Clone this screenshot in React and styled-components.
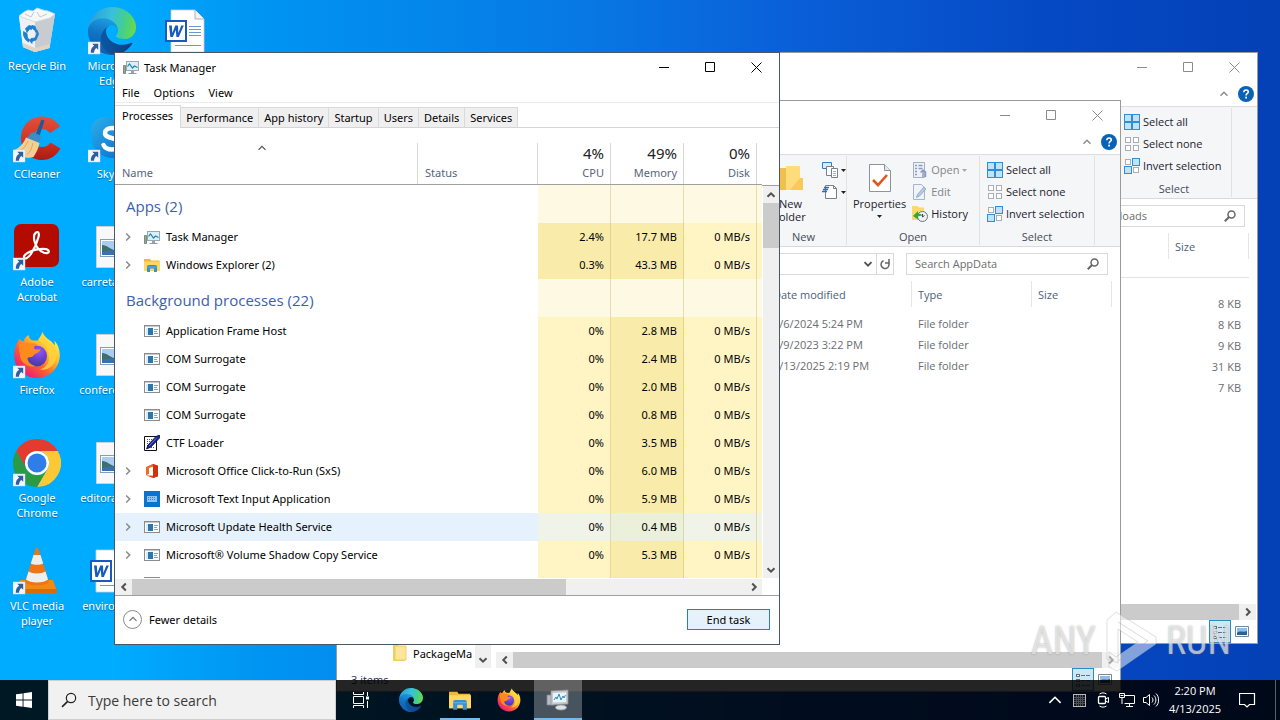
import React from "react";
import styled, { createGlobalStyle, css } from "styled-components";

const uiFont = '"Open Sans", "Noto Sans", sans-serif';
const wideFont = '"Noto Sans", "Open Sans", sans-serif';

const GlobalStyle = createGlobalStyle`
  * { box-sizing: border-box; }
  html, body, #root { height: 100%; }
  body {
    margin: 0;
    overflow: hidden;
    font: 11px/15px ${uiFont};
    color: #000;
  }
  button, input {
    font: inherit;
    color: inherit;
    margin: 0;
    padding: 0;
    border: 0;
    background: none;
  }
  a { color: inherit; text-decoration: none; }
  svg { display: block; flex: none; }
`;

/* ---------- icons ---------- */

const Svg = ({ size = 16, box = size, w, h, children, ...rest }) => (
  <svg width={w || size} height={h || size} viewBox={w ? `0 0 ${w} ${h}` : `0 0 ${box} ${box}`} fill="none" aria-hidden="true" {...rest}>
    {children}
  </svg>
);

const ShortcutArrow = () => (
  <g>
    <rect x="0" y="35" width="12" height="12" fill="#f4f7fb" stroke="#c9d6e4" strokeWidth=".5" />
    <path d="M4.200 36.800h6v6L8.400 41C6.900 42 6.200 43.500 6 45.800H2.800C2.600 42.600 3.800 40.200 6.200 38.800z" fill="#2f5f9e" />
  </g>
);

const EdgeArt = ({ id }) => (
  <g>
    <defs>
      <linearGradient id={`${id}a`} x1="60" y1="180" x2="235" y2="180" gradientUnits="userSpaceOnUse">
        <stop offset="0" stopColor="#0c59a4" /><stop offset="1" stopColor="#0b3f86" />
      </linearGradient>
      <linearGradient id={`${id}b`} x1="120" y1="70" x2="60" y2="240" gradientUnits="userSpaceOnUse">
        <stop offset="0" stopColor="#1b9de2" /><stop offset=".5" stopColor="#1173c4" /><stop offset="1" stopColor="#0f5fae" />
      </linearGradient>
      <linearGradient id={`${id}c`} x1="10" y1="60" x2="250" y2="110" gradientUnits="userSpaceOnUse">
        <stop offset="0" stopColor="#2c9fd8" /><stop offset=".45" stopColor="#38c1dc" /><stop offset=".75" stopColor="#42cf8e" /><stop offset="1" stopColor="#6ad94a" />
      </linearGradient>
    </defs>
    <path fill={`url(#${id}a)`} d="M231.080 190.540c-3.380 1.760-6.860 3.330-10.420 4.690a101.500 101.500 0 0 1-36.260 6.690c-47.350 0-88.600-32.570-88.600-74.360a31.400 31.400 0 0 1 16.470-27.310c-42.800 1.800-53.800 46.400-53.800 72.530 0 73.880 68.090 81.370 82.760 81.370 7.910 0 19.840-2.300 27-4.560l1.310-.44a128.340 128.340 0 0 0 66.600-52.800 4 4 0 0 0-5.060-5.810z" />
    <path fill={`url(#${id}b)`} d="M105.730 241.420a79.200 79.200 0 0 1-22.740-21.340 80.720 80.720 0 0 1 29.280-119.820c3.120-1.470 8.450-4.120 15.540-4a32.350 32.350 0 0 1 25.690 13 31.880 31.880 0 0 1 6.360 18.660c0-.21 24.460-79.600-80-79.600-43.900 0-80 41.660-80 78.210a130.150 130.150 0 0 0 12.110 56 128 128 0 0 0 156.380 67.110 75.550 75.550 0 0 1-62.780-8z" />
    <path fill={`url(#${id}c)`} d="M152.330 148.860c-.81 1.050-3.300 2.500-3.300 5.660 0 2.610 1.700 5.120 4.720 7.230 14.380 10 41.490 8.680 41.560 8.680a59.560 59.560 0 0 0 30.270-8.350 61.380 61.380 0 0 0 30.430-52.880c.26-22.410-8-37.310-11.340-43.910C223.460 23.840 177.720 0 128 0A128 128 0 0 0 0 126.200c.48-36.540 36.800-66.050 80-66.050 3.500 0 23.460.34 42 10.070 16.340 8.580 24.900 18.940 30.850 29.210 6.180 10.670 7.280 24.150 7.280 29.520 0 5.370-2.740 13.330-7.800 19.910z" />
  </g>
);

const FirefoxArt = ({ id }) => (
  <g>
    <defs>
      <linearGradient id={`${id}a`} x1="40" y1="6" x2="8" y2="42" gradientUnits="userSpaceOnUse">
        <stop offset="0" stopColor="#fff14f" /><stop offset=".35" stopColor="#ffb52a" /><stop offset=".65" stopColor="#ff5a36" /><stop offset="1" stopColor="#e8197a" />
      </linearGradient>
      <radialGradient id={`${id}b`} cx="26" cy="20" r="14" gradientUnits="userSpaceOnUse">
        <stop offset="0" stopColor="#9059ff" /><stop offset=".6" stopColor="#6a3fd0" /><stop offset="1" stopColor="#4a3fa8" />
      </radialGradient>
    </defs>
    <path fill={`url(#${id}a)`} d="M29.500 1c-.6 3.300-3.300 5.600-4.700 8.800-2-.5-3.600-.5-5-.2-3.300-1.300-4.100-3.800-4-5.600-3 1.500-4.500 4-5.200 6.200-1.700-.2-3-.6-4-2.200C3 12.500 1.200 18 1.200 24.500 1.200 37 11.500 47 24 47s22.800-10 22.800-23c0-6.500-2.500-11.500-5.600-14.600.6 2 .8 3.600.6 5.200C38.800 9 31.500 7.500 29.500 1z" />
    <circle cx="23.500" cy="25" r="10.500" fill={`url(#${id}b)`} />
    <path fill="#ff8b1f" d="M5.500 14.500c2.500-2.500 7-3.500 10.500-2 3.500-1.200 6.500-.2 8.500 1.500-2.500.5-3.500 1.800-3.500 3.500 2 1.500 4.200.8 6.500 1-1 3.500-5.500 3.500-7 6-1.500 2.400-3.500 1-6 2.500 0 4 4 7.500 8.500 8-6 2-13.500-1.500-15.500-8-1-4.500-1-9-2-12.500z" />
    <path fill="#ffd23e" d="M29.500 1c-.6 3.300-3.300 5.600-4.200 8.600 5.200 1.500 9.500 6 9.700 12.400 3 8-1 14.500-8 16.500 8 1.500 15.500-4 16.300-13.500C44 16 38.500 14 35 10.500 32 7.500 30 4.500 29.500 1z" opacity=".85" />
  </g>
);

const EdgeIcon = ({ size = 48, shortcut, id }) => (
  <Svg size={size} box={48}>
    <g transform="scale(.1875)"><EdgeArt id={id} /></g>
    {shortcut && <ShortcutArrow />}
  </Svg>
);

const FirefoxIcon = ({ size = 48, shortcut, id }) => (
  <Svg size={size} box={48}>
    <FirefoxArt id={id} />
    {shortcut && <ShortcutArrow />}
  </Svg>
);

const RecycleBinIcon = () => (
  <Svg size={48}>
    <path d="M6 9l36-2-5.500 34L22 45l-12-5z" fill="#dfe3e6" />
    <path d="M6 9l16 5v31l-12-5z" fill="#eef1f3" />
    <path d="M22 14l20-7-5.500 34L22 45z" fill="#c8ccd0" />
    <path d="M6 9l5-4 4-2 5 1 4-3 6 2 5 1 7 3-5 4-15 4z" fill="#f6f7f8" stroke="#cfd4d8" strokeWidth=".8" />
    <path d="M12 7l6 3 3-5M24 5l3 5 7-3" stroke="#c3c8cc" strokeWidth="1" />
    <path d="M10 36l12 5 15-4-.6 4L22 45l-12-5z" fill="#e3d3c6" />
    <g fill="#1c7fd0" stroke="#1c7fd0" strokeWidth=".8">
      <path d="M12.500 21.500l3.500-3 4 1-1.500 3-2-.5-2.500 3.500z" />
      <path d="M19 18.500l3 .7 1.500 4.500-2.500-.7-2.500-3z" />
      <path d="M10.500 24.500l3.500 2 .5 4.500 2 1.500-1 2.500-3-2.500-2-4z" />
      <path d="M18 31.500l4-.5 2-4.500-2-2.500 2-1 1.500 4-2.500 6-4 1.500v2l-2.500-3z" />
    </g>
  </Svg>
);

const WordIcon = () => (
  <Svg size={48}>
    <path d="M8 3h24l9 9v33H8z" fill="#fff" stroke="#c6cbd2" strokeWidth=".8" />
    <path d="M32 3v9h9" fill="#f2f2f2" stroke="#9aa0a8" strokeWidth=".8" />
    <path d="M26 19.500h12M26 22.500h12M26 25.500h12M26 28.500h12M12 38.500h26" stroke="#6d97d3" strokeWidth="1" />
    <rect x="2" y="13" width="22" height="22" fill="#185abd" />
    <rect x="4" y="15" width="18" height="18" fill="#fff" />
    <path d="M6 18.500h2.800l.5 7.500 3-7.500H15l.3 7.500 3-7.500h2.500l-5 11.500h-2.400l-.6-7-3 7H7.400z" fill="#185abd" />
  </Svg>
);

const CCleanerIcon = () => (
  <Svg size={48}>
    <defs>
      <linearGradient id="cc" x1="30" y1="0" x2="30" y2="46" gradientUnits="userSpaceOnUse">
        <stop offset="0" stopColor="#e5523d" /><stop offset=".6" stopColor="#cf2f22" /><stop offset="1" stopColor="#a91a13" />
      </linearGradient>
    </defs>
    <path d="M47 11.500L37 18c-2-2.500-4.500-4-8-4-5 0-9 4-9 9s4 9 9 9c3.500 0 6.500-1.500 8.500-4.500l10 6C43.500 40.500 37 45 29 45 17 45 8 35.500 8 23.500 8 11 17 1.500 29 1.500c8 0 14 4 18 10z" fill="url(#cc)" />
    <path d="M28.500 4.500l3 1-5.500 17-4-1.500z" fill="#1a5c94" />
    <path d="M19 17l9 3.500-2 8-13-4.500z" fill="#3d8cc4" />
    <path d="M13 22.500l13.500 5.500c-1 5-3 9.500-6 14-5 2-14 .5-20-7 5-1 10-6 12.500-12.500z" fill="#f3cf96" />
    <path d="M15 26c-2 5-5 8-8 10M20 28c-1 5-3 9-6 12" stroke="#d9a868" strokeWidth="1" />
    <ShortcutArrow />
  </Svg>
);

const SkypeIcon = () => (
  <Svg size={48}>
    <defs>
      <linearGradient id="sk" x1="5" y1="5" x2="40" y2="44" gradientUnits="userSpaceOnUse">
        <stop offset="0" stopColor="#29abe9" /><stop offset="1" stopColor="#0a6ccb" />
      </linearGradient>
    </defs>
    <path d="M17 2c3 0 5 .8 6.500 1.800C35.500 3.600 45 13 44.500 25c4 8-1.500 20-12 20-3 0-5-.8-7-2C13 43 3.500 34 4 22-.5 13 6 2 17 2z" fill="url(#sk)" />
    <path d="M32 17c-1.500-3-4.500-4-8-4-4 0-7 2-7 5 0 7 15 3.500 15 11 0 3.500-3.500 5.500-8 5.500-4 0-7-1.500-8.500-4.500" stroke="#fff" strokeWidth="4.500" strokeLinecap="round" />
    <ShortcutArrow />
  </Svg>
);

const AcrobatIcon = () => (
  <Svg size={48}>
    <rect x="1" y="1" width="45" height="43" rx="7" fill="#b30b00" />
    <path d="M23 9.500c2-1.500 3.500.5 2.500 4.500-1 4-4 11.500-7.500 17-3 4.500-6.500 5.500-7 3.500-.7-3 6-6.500 12-7.800 5-1 11-1.300 12.500.8 1.300 2-1.500 3.300-4.500 2.300-4-1.500-8-6-9.500-11.500-.8-3.500-.5-7.500 1.500-8.800z" stroke="#fff" strokeWidth="2.200" />
    <ShortcutArrow />
  </Svg>
);

const PictureFileIcon = () => (
  <Svg size={48}>
    <path d="M8.500 3.500h24l8 8v33h-32z" fill="#f8f8f8" stroke="#d0d0d0" />
    <path d="M32.500 3.500v8h8" fill="#e8e8e8" stroke="#c4c4c4" />
    <rect x="12.500" y="16.500" width="24" height="17" fill="#fff" stroke="#7fa0bd" />
    <rect x="14" y="18" width="21" height="14" fill="#a9cdf0" />
    <path d="M14 22c5 0 8 4 12 5 4 .6 6-.6 9-2v7H14z" fill="#3e6f6a" />
    <path d="M14 29c6-2 14-2 21 0v3H14z" fill="#3a6fb0" />
  </Svg>
);

const ChromeIcon = () => (
  <Svg size={48}>
    <path d="M3.200 12A24 24 0 0 1 44.800 12H24A12 12 0 0 0 13.600 30z" fill="#e33b2e" />
    <path d="M44.800 12A24 24 0 0 1 24 48l10.400-18A12 12 0 0 0 24 12z" fill="#fcc934" />
    <path d="M24 48A24 24 0 0 1 3.200 12l10.400 18a12 12 0 0 0 20.800 0z" fill="#2a9a47" />
    <circle cx="24" cy="24" r="12" fill="#fff" />
    <circle cx="24" cy="24" r="9.500" fill="#2f7de9" />
    <ShortcutArrow />
  </Svg>
);

const VlcIcon = () => (
  <Svg size={48}>
    <path d="M7 33h33l4 11.500c0 1-.5 1.500-1.500 1.500H4c-1 0-1.500-.5-1.300-1.500z" fill="#f28a12" />
    <path d="M3 42h41v2.500c0 1-.5 1.500-1.500 1.500H4c-1 0-1.300-.5-1.300-1.500z" fill="#d86c05" />
    <path d="M22.500 2c.5-1.200 2.500-1.200 3 0L36 35c-3 4.500-21 4.500-24 0z" fill="#ee7516" />
    <path d="M20.500 8h7l2.700 8.500c-2.800 1.800-9.400 1.800-12.400 0zM15.500 24.500c4 2.500 13 2.500 17 0l2.500 8c-4 4-18 4-22 0z" fill="#efeeec" />
    <ShortcutArrow />
  </Svg>
);

const TaskManagerIcon = () => (
  <Svg size={16}>
    <path d="M.5 6.500h2v8h-2z" fill="#8fae90" stroke="#7b8a84" />
    <rect x="3.500" y="2.500" width="12" height="9" fill="#dceef8" stroke="#9aa6b0" />
    <path d="M4.500 7.500l2-2.500 3 4 2-2 3 1.500" stroke="#1c84ae" strokeWidth="1.200" />
    <path d="M8 12h3v2H8z" fill="#9aa4ad" />
    <path d="M5.500 14.500h8" stroke="#8d9aa5" />
  </Svg>
);

const FolderAppIcon = ({ size = 16 }) => (
  <Svg size={size} box={16}>
    <path d="M0 2h6l1 1.500h8.500V14H0z" fill="#f0b73a" />
    <path d="M0 4.500h16V14H0z" fill="#fdd663" />
    <path d="M3 15V9.500C3 8.500 3.700 8 4.500 8h7c.8 0 1.500.5 1.500 1.500V15h-3v-3.500H6V15z" fill="#3c8fd4" />
    <path d="M3 10h10" stroke="#62b0ea" strokeWidth=".8" />
  </Svg>
);

const ProcessIcon = () => (
  <Svg size={16} shapeRendering="crispEdges">
    <rect x=".5" y="2.500" width="15" height="11" fill="#fbfcfd" stroke="#8b8b8b" />
    <path d="M1 3.500h14" stroke="#c3cad0" />
    <rect x="2" y="5" width="3" height="7" fill="#d9ecf8" />
    <rect x="4" y="5" width="5" height="7" fill="#2b76ad" />
    <path d="M10 6.500h4M10 8.500h3M10 10.500h4" stroke="#8ca7bc" />
  </Svg>
);

const CtfIcon = () => (
  <Svg size={16}>
    <path d="M.5 1.500h12v14H.5z" fill="#fff" stroke="#111" />
    <path d="M3 4.500h6M3 6.500h5M3 8.500h4M3 10.500h3M3 12.500h7" stroke="#555" strokeDasharray="1 1" />
    <path d="M15.500 0L16 2.500 7 12l-4.500 2L4 10 12 1.500z" fill="#12259a" stroke="#070b3c" strokeWidth=".8" />
    <path d="M5 11l8-8.500" stroke="#7f93e8" strokeWidth=".8" />
  </Svg>
);

const OfficeIcon = () => (
  <Svg size={16}>
    <path d="M9 1l5 1.700v10.600L9 15l-7-2.800 7 .6V3.600L5 4.800v6l-3 1.300V4.200z" fill="#e2401b" />
    <path d="M9 1l5 1.700v10.600L9 15z" fill="#d2300f" />
    <path d="M9 1v2.600L5 4.800v6l-3 1.300V4.200z" fill="#f06a2a" />
  </Svg>
);

const KeyboardIcon = () => (
  <Svg size={16} shapeRendering="crispEdges">
    <rect width="16" height="16" fill="#0b74d0" />
    <rect x="3" y="5" width="10" height="6" fill="#8fc4f0" />
    <path d="M4 6.500h8M4 8.500h8" stroke="#2f86d4" strokeDasharray="1 1" />
  </Svg>
);

const Caret = ({ dir = "down", size = 10, color = "#505050", weight = 2 }) => {
  const turn = { down: 0, left: 90, up: 180, right: 270 }[dir];
  return (
    <Svg size={size} box={10}>
      <path d="M1.500 3.200L5 6.700l3.500-3.500" stroke={color} strokeWidth={weight} transform={`rotate(${turn} 5 5)`} />
    </Svg>
  );
};

const DropArrow = ({ color = "#222" }) => (
  <Svg w={5} h={3}><path d="M0 0h5L2.500 3z" fill={color} /></Svg>
);

const MinimizeGlyph = () => <Svg size={11}><path d="M0 5.500h10" stroke="currentColor" /></Svg>;
const MaximizeGlyph = () => <Svg size={11}><path d="M.5.5h9v9h-9z" stroke="currentColor" /></Svg>;
const CloseGlyph = () => <Svg size={11}><path d="M.5.5l10 10M10.500.5l-10 10" stroke="currentColor" /></Svg>;

const SearchGlyph = ({ size = 12, color = "#666", weight = 2 }) => (
  <Svg size={size} box={12}>
    <circle cx="7.500" cy="4.500" r="3.500" stroke={color} strokeWidth={weight * 0.75} />
    <path d="M5 7L.8 11.200" stroke={color} strokeWidth={weight} />
  </Svg>
);

const RefreshGlyph = () => (
  <Svg size={12}>
    <path d="M9.500 4.500A4 4 0 1 1 4.500 2.800" stroke="#666" strokeWidth="1.500" />
    <path d="M10 1v4H6" stroke="#666" strokeWidth="1.500" />
  </Svg>
);

const SelectAllIcon = () => (
  <Svg size={16} shapeRendering="crispEdges">
    <rect width="16" height="16" fill="#2f8ed6" />
    <path d="M1 1h6v6H1zM9 1h6v6H9zM1 9h6v6H1zM9 9h6v6H9z" fill="#bfe3fa" />
  </Svg>
);
const SelectNoneIcon = () => (
  <Svg size={16} shapeRendering="crispEdges">
    <path d="M1.500 1.500h5v5h-5zM9.500 1.500h5v5h-5zM1.500 9.500h5v5h-5zM9.500 9.500h5v5h-5z" fill="#fff" stroke="#a9aeb4" />
  </Svg>
);
const InvertIcon = () => (
  <Svg size={16} shapeRendering="crispEdges">
    <path d="M1.500 1.500h5v5h-5zM9.500 9.500h5v5h-5z" fill="#fff" stroke="#a9aeb4" />
    <path d="M8.500.5h7v7h-7zM.5 8.500h7v7h-7z" fill="#bfe3fa" stroke="#2f8ed6" />
  </Svg>
);
const PropertiesIcon = () => (
  <Svg w={22} h={28}>
    <path d="M.5.5h15l6 6v21H.5z" fill="#fff" stroke="#8b959e" />
    <path d="M15.500.5v6h6" fill="#e3e9ef" stroke="#8b959e" />
    <path d="M4 16l5 5 9-10" stroke="#e2571e" strokeWidth="2.600" />
  </Svg>
);
const OpenIcon = () => (
  <Svg size={16}>
    <path d="M1.500.5h11v15h-11z" fill="#eef1f6" stroke="#a5afc2" />
    <path d="M3 3.500h2M3 6.500h2M3 9.500h2M3 12.500h2M6.500 3.500h4M6.500 6.500h4" stroke="#8a9ac0" strokeWidth="1.500" />
    <path d="M11 15V8M8.500 10.500L11 8l3 2.500M13.500 9v6" stroke="#8c9cc0" strokeWidth="1.500" />
  </Svg>
);
const EditIcon = () => (
  <Svg size={16}>
    <path d="M1.500.5h8l3 3v12h-11z" fill="#f0f3f8" stroke="#a5b4cc" />
    <path d="M14 5L7.500 12l-3 1.500 1-3L12 3z" fill="#b9cbe4" stroke="#86a0c6" strokeWidth=".8" />
  </Svg>
);
const HistoryIcon = () => (
  <Svg size={16}>
    <path d="M0 0h6l1 1.500h5V14H0z" fill="#fbd96b" />
    <circle cx="10.500" cy="10.500" r="5" fill="#eef2f4" stroke="#68747c" />
    <path d="M10.500 8v3l2-1.500" stroke="#444" />
    <path d="M1 10l5-5v2.800c3-.5 4 .7 4.500 2.200-1.500-.6-3-.4-4.500.5v3z" fill="#2faa3a" />
  </Svg>
);
const NewFolderIcon = () => (
  <Svg w={26} h={28}>
    <path d="M2 4h10l2 3h6v19H2z" fill="#f0c04e" />
    <path d="M8 2h14v24H8z" fill="#fddc7c" />
    <path d="M22 14h3v12H12z" fill="#f7ca5a" />
  </Svg>
);
const NewItemIcon = () => (
  <Svg size={16}>
    <path d="M.5.5h9v6h-9z" fill="#d6ecfb" stroke="#3a7ab8" />
    <path d="M4.500 4.500h7v9h-7z" fill="#fff" stroke="#77818b" />
    <path d="M9.500 6.500h6v9h-6z" fill="#fff" stroke="#77818b" />
    <path d="M11 9.500h3M11 11.500h3M11 13.500h3" stroke="#a5adb5" />
  </Svg>
);
const EasyAccessIcon = () => (
  <Svg size={16}>
    <path d="M3.500 1.500h8l3 3v10h-11z" fill="#fff" stroke="#77818b" />
    <path d="M11.500 1.500v3h3" stroke="#77818b" />
    <path d="M2 3.500h5M1 5.500h5M0 7.500h5" stroke="#2c6fb5" strokeWidth="1.300" />
  </Svg>
);
const FolderIcon = () => (
  <Svg size={16}>
    <path d="M1 0h5l1 1h6v15H1z" fill="#f3cd6c" />
    <path d="M3 1h11v14H3z" fill="#fde69b" stroke="#eec55c" strokeWidth=".8" />
  </Svg>
);
const DetailsViewIcon = () => (
  <Svg size={16} shapeRendering="crispEdges">
    <path d="M1.500 2.500h3v2h-3zM1.500 7.500h3v2h-3zM1.500 12.500h3v2h-3z" fill="#fff" stroke="#65707c" />
    <path d="M6 3.500h4M11 3.500h4M6 8.500h4M11 8.500h4M6 13.500h4M11 13.500h4" stroke="#65707c" />
  </Svg>
);
const ThumbViewIcon = () => (
  <Svg w={14} h={11}>
    <path d="M.5.5h13v10H.5z" fill="#fff" stroke="#7b8894" />
    <path d="M2 2h10v7H2z" fill="#8dbdea" />
    <path d="M2 7c3-3 6 0 10-2v4H2z" fill="#2d5f95" />
  </Svg>
);
const HelpIcon = () => (
  <Svg size={16}>
    <circle cx="8" cy="8" r="8" fill="#0a62b5" />
    <path d="M5.800 6.200C5.900 4.500 7 4 8.100 4c1.300 0 2.200.8 2.200 1.900C10.300 7.500 8.100 7.500 8.100 9.500" stroke="#fff" strokeWidth="1.600" />
    <rect x="7.200" y="10.700" width="1.800" height="1.800" fill="#fff" />
  </Svg>
);

const WindowsLogo = () => (
  <Svg size={16}>
    <path d="M0 2.300L6.600 1.400v6.200H0zM7.500 1.200L16 0v7.600H7.500zM0 8.500h6.600v6.200L0 13.800zM7.500 8.500H16V16l-8.500-1.200z" fill="#fff" />
  </Svg>
);
const TaskViewIcon = () => (
  <Svg size={18}>
    <path d="M1.500 1v2.500h10V1M1.500 17v-2.500h10V17M1.500 5.500h10v7h-10zM15.500 1v4M15.500 10v7" stroke="#fff" />
    <rect x="14" y="5.500" width="3" height="3" fill="#fff" />
  </Svg>
);
const TaskManagerLarge = () => (
  <Svg size={24}>
    <path d="M1 7h7v10H1z" fill="#b7bdc1" stroke="#83898d" strokeWidth=".8" />
    <path d="M5 3l17-1v14l-17 1z" fill="#c5c9cc" stroke="#8d9296" strokeWidth=".8" />
    <path d="M7 5l13-.6v9.600L7 14.600z" fill="#e7f4fb" />
    <path d="M8 12l2-3 1 2 2-5 2 6 2-4 1 2 1.500-3" stroke="#3c87b5" />
    <ellipse cx="15" cy="19.500" rx="5.500" ry="2.500" fill="#dfe2e4" stroke="#9a9fa3" strokeWidth=".8" />
  </Svg>
);
const TrayGridIcon = () => (
  <Svg size={13} shapeRendering="crispEdges">
    <rect x=".5" y=".5" width="12" height="12" fill="#11161c" stroke="#b6babd" />
    <path d="M3.500 1v11M5.500 1v11M7.500 1v11M9.500 1v11M1 3.500h11M1 5.500h11M1 7.500h11M1 9.500h11" stroke="#4b5156" />
  </Svg>
);
const TrayCameraIcon = () => (
  <Svg size={16}>
    <rect x="3.500" y="4.500" width="7" height="7" rx="1" stroke="#fff" strokeWidth="1.300" />
    <path d="M10.500 7l3-1.500v5l-3-1.500M4.500 2c2-1.500 5-1.500 7 0M4.500 14c2 1.500 5 1.500 7 0" stroke="#fff" />
  </Svg>
);
const TrayNetworkIcon = () => (
  <Svg size={16}>
    <path d="M5.500 3.500h10v8h-10M10.500 11.500v3M7 14.500h7" stroke="#fff" />
    <path d="M.5 1.500h5v4h-5zM3 5.500v6.500M1.500 3.500h3" stroke="#fff" />
  </Svg>
);
const TrayVolumeIcon = () => (
  <Svg size={16}>
    <path d="M.5 5.500H3L6.500 2.500v11L3 10.500H.5zM9 5.500c1.300 1.500 1.300 3.500 0 5M11 3.500c2.500 2.500 2.500 6.500 0 9M13 1.500c3.500 3.500 3.500 9.500 0 13" stroke="#fff" />
  </Svg>
);
const ActionCenterIcon = () => (
  <Svg size={17}>
    <path d="M.5 1.500h15v11h-5L8 15l-2.500-2.500h-5z" stroke="#fff" strokeWidth="1.200" />
  </Svg>
);

/* ---------- desktop ---------- */

const Desktop = styled.div`
  position: relative;
  height: 100vh;
  overflow: hidden;
  background: linear-gradient(90deg, #00acff 0%, #00acff 9%, #0095f2 20%, #0779e4 45%, #0a5fd8 62%, #0549c4 82%, #0440b6 100%);
`;

const IconGrid = styled.nav`
  display: grid;
  grid-template-rows: repeat(6, 108px);
  grid-auto-columns: 74px;
  grid-auto-flow: column;
  column-gap: 1px;
  justify-content: start;
`;

const DesktopItem = styled.a`
  display: flex;
  flex-direction: column;
  align-items: center;
  gap: 3px;
  padding-top: 7px;
  font-family: ${wideFont};
  color: #fff;
  text-align: center;
  text-shadow: 0 1px 1px rgba(0, 60, 120, 0.6);
`;

const desktopItems = [
  ["Recycle Bin", <RecycleBinIcon />],
  ["CCleaner", <CCleanerIcon />],
  ["Adobe Acrobat", <AcrobatIcon />],
  ["Firefox", <FirefoxIcon shortcut id="ffd" />],
  ["Google Chrome", <ChromeIcon />],
  ["VLC media player", <VlcIcon />],
  ["Microsoft Edge", <EdgeIcon shortcut id="edd" />],
  ["Skype", <SkypeIcon />],
  ["carretas.jpg", <PictureFileIcon />],
  ["confered.jpg", <PictureFileIcon />],
  ["editorarl.jpg", <PictureFileIcon />],
  ["environs.rtf", <WordIcon />],
  ["", <WordIcon />],
];

/* ---------- shared window parts ---------- */

const WindowFrame = styled.section`
  position: absolute;
  top: ${(p) => p.$top}px;
  left: ${(p) => p.$left}px;
  right: ${(p) => p.$right}px;
  bottom: ${(p) => p.$bottom}px;
  display: flex;
  flex-direction: column;
  background: #fff;
  border: 1px solid ${(p) => (p.$active ? "#4a5866" : "#9a9a9a")};
  font-family: ${(p) => (p.$active ? wideFont : uiFont)};
`;

const TitleBar = styled.header`
  display: flex;
  align-items: center;
  height: 30px;
  flex: none;
  padding: 0 0 2px 8px;
  color: ${(p) => (p.$active ? "#000" : "#8a8a8a")};
`;

const Title = styled.h1`
  flex: 1;
  margin: 0;
  padding-left: 5px;
  font-size: 11px;
  font-weight: 400;
`;

const CaptionButton = styled.button`
  display: flex;
  align-items: center;
  justify-content: center;
  width: 46px;
  height: 28px;
`;

const Caption = ({ active, icon, title }) => (
  <TitleBar $active={active}>
    {icon}
    <Title>{title}</Title>
    <CaptionButton aria-label="Minimize"><MinimizeGlyph /></CaptionButton>
    <CaptionButton aria-label="Maximize"><MaximizeGlyph /></CaptionButton>
    <CaptionButton aria-label="Close"><CloseGlyph /></CaptionButton>
  </TitleBar>
);

const ScrollTrack = styled.div`
  display: flex;
  flex: none;
  flex-direction: ${(p) => (p.$vertical ? "column" : "row")};
  ${(p) => (p.$vertical ? "width: 16px;" : "height: 16px;")}
  background: #f0f0f0;
`;

const ScrollButton = styled.button`
  display: flex;
  align-items: center;
  justify-content: center;
  flex: none;
  width: ${(p) => (p.$vertical ? 16 : 17)}px;
  height: ${(p) => (p.$vertical ? 17 : 16)}px;
`;

const ScrollThumb = styled.div`
  flex: ${(p) => p.$grow || "none"};
  ${(p) => p.$length && `height: ${p.$length}px;`}
  background: #cbcbcb;
`;

const ScrollRest = styled.div`
  flex: ${(p) => p.$grow || 1};
`;

/* ---------- task manager ---------- */

const MenuBar = styled.nav`
  display: flex;
  align-items: center;
  height: 20px;
  flex: none;
  border-bottom: 1px solid #ececec;
`;

const MenuItem = styled.button`
  padding: 0 7px;
`;

const TabStrip = styled.div`
  display: flex;
  align-items: flex-end;
  height: 25px;
  flex: none;
  border-bottom: 1px solid #d5d5d5;
`;

const Tab = styled.button`
  height: 20px;
  padding: 0 5px 1px;
  background: #f0eff0;
  border: solid #d9d9d9;
  border-width: 1px 1px 0 0;
  ${(p) => p.$active && css`
    height: 23px;
    padding: 0 7px 3px;
    margin-bottom: -1px;
    background: #fff;
  `}
`;

const ProcessArea = styled.div`
  display: flex;
  flex: 1;
  min-height: 0;
`;

const TableViewport = styled.div`
  flex: 1;
  min-width: 0;
  overflow: hidden;
`;

const ScrollColumn = styled.div`
  display: flex;
  flex-direction: column;
  width: 17px;
  padding-left: 1px;

  &::before {
    content: "";
    height: 57px;
    flex: none;
    margin-left: -1px;
    border-bottom: 1px solid #a0a0a0;
  }
  > div { flex: 1; }
`;

const ProcessTable = styled.table`
  width: 100%;
  table-layout: fixed;
  border-collapse: separate;
  border-spacing: 0;
  th, td { padding: 0; font-weight: 400; text-align: left; }
`;

const HeadCell = styled.th`
  height: 57px;
  vertical-align: bottom;
  border-bottom: 1px solid #a0a0a0;
`;

const HeadInner = styled.div`
  display: flex;
  flex-direction: column;
  justify-content: flex-end;
  align-items: ${(p) => (p.$numeric ? "flex-end" : "stretch")};
  gap: 3px;
  height: 41px;
  padding: ${(p) => (p.$numeric ? "0 6px 4px" : "0 7px 4px")};
  color: #56657a;
  border-right: 1px solid #d8d8d8;
`;

const SortMark = styled.span`
  display: flex;
  justify-content: center;
  flex: 1;
  padding-right: 8px;
`;

const Total = styled.strong`
  font-size: 15px;
  line-height: 18px;
  font-weight: 400;
  color: #222;
`;

const heat = { faint: "#fef9e3", low: "#fff4c4", high: "#f9ecaa" };
const heatHover = { low: "#f0f3e7", high: "#eaf0da" };

const MetricCell = styled.td`
  && {
    padding: 0 6px 2px 0;
    text-align: right;
    background: ${(p) => (p.$hover ? heatHover : heat)[p.$heat]};
    border-right: ${(p) => (p.$last ? 0 : 1)}px solid rgba(190, 165, 80, 0.35);
  }
`;

const GroupHeading = styled.th`
  && {
    height: 38px;
    padding: 4px 0 0 11px;
    vertical-align: middle;
    color: #3d60ad;
    font-family: ${uiFont};
    font-size: 15px;
    line-height: 20px;
  }
`;

const ProcessRow = styled.tr`
  height: 28px;
  background: ${(p) => (p.$hover ? "#e5f2fd" : "#fff")};
`;

const NameCell = styled.div`
  display: flex;
  align-items: center;
  gap: 6px;
  padding-left: 6px;
  white-space: nowrap;

  > span { padding-bottom: 2px; }
`;

const Expander = styled.button`
  display: flex;
  align-items: center;
  justify-content: center;
  width: 14px;
  height: 20px;
  margin-right: 3px;
  visibility: ${(p) => (p.$shown ? "visible" : "hidden")};
`;

const HorizontalScroll = styled.div`
  flex: none;
  height: 17px;
  padding: 1px 17px 0 0;
`;

const Footer = styled.footer`
  display: flex;
  align-items: center;
  justify-content: space-between;
  height: 49px;
  flex: none;
  padding: 0 9px 2px 8px;
  border-top: 1px solid #a0a0a0;
`;

const DetailsToggle = styled.button`
  display: flex;
  align-items: center;
  gap: 7px;
`;

const RoundMark = styled.span`
  display: flex;
  align-items: center;
  justify-content: center;
  width: 19px;
  height: 19px;
  border: 1px solid #8a8a8a;
  border-radius: 50%;
`;

const EndTask = styled.button`
  width: 83px;
  height: 21px;
  background: #e5f1fb;
  border: 1px solid #2a7fb8;
`;

const groups = [
  {
    title: "Apps (2)",
    rows: [
      ["Task Manager", <TaskManagerIcon />, true, "2.4%", "17.7 MB", "high"],
      ["Windows Explorer (2)", <FolderAppIcon />, true, "0.3%", "43.3 MB", "high"],
    ],
  },
  {
    title: "Background processes (22)",
    rows: [
      ["Application Frame Host", <ProcessIcon />, false, "0%", "2.8 MB", "low"],
      ["COM Surrogate", <ProcessIcon />, false, "0%", "2.4 MB", "low"],
      ["COM Surrogate", <ProcessIcon />, false, "0%", "2.0 MB", "low"],
      ["COM Surrogate", <ProcessIcon />, false, "0%", "0.8 MB", "low"],
      ["CTF Loader", <CtfIcon />, false, "0%", "3.5 MB", "low"],
      ["Microsoft Office Click-to-Run (SxS)", <OfficeIcon />, true, "0%", "6.0 MB", "low"],
      ["Microsoft Text Input Application", <KeyboardIcon />, true, "0%", "5.9 MB", "low"],
      ["Microsoft Update Health Service", <ProcessIcon />, true, "0%", "0.4 MB", "low", true],
      ["Microsoft® Volume Shadow Copy Service", <ProcessIcon />, true, "0%", "5.3 MB", "low"],
      ["", <ProcessIcon />, false, "", "", "low"],
    ],
  },
];

const tabs = ["Processes", "Performance", "App history", "Startup", "Users", "Details", "Services"];

const TaskManager = () => (
  <WindowFrame $active $top={52} $left={114} $right={500} $bottom={75}>
    <Caption active icon={<TaskManagerIcon />} title="Task Manager" />
    <MenuBar>
      {["File", "Options", "View"].map((m) => <MenuItem key={m}>{m}</MenuItem>)}
    </MenuBar>
    <TabStrip role="tablist">
      {tabs.map((t, i) => <Tab key={t} role="tab" $active={i === 0}>{t}</Tab>)}
    </TabStrip>
    <ProcessArea>
      <TableViewport>
        <ProcessTable>
          <colgroup>
            <col />
            <col style={{ width: 120 }} />
            <col style={{ width: 73 }} />
            <col style={{ width: 73 }} />
            <col style={{ width: 73 }} />
            <col style={{ width: 5 }} />
          </colgroup>
          <thead>
            <tr>
              <HeadCell><HeadInner><SortMark><Caret dir="up" weight={1.2} /></SortMark>Name</HeadInner></HeadCell>
              <HeadCell><HeadInner>Status</HeadInner></HeadCell>
              {[["4%", "CPU"], ["49%", "Memory"], ["0%", "Disk"]].map(([total, label]) => (
                <HeadCell key={label}><HeadInner $numeric><Total>{total}</Total>{label}</HeadInner></HeadCell>
              ))}
              <HeadCell />
            </tr>
          </thead>
          {groups.map((g) => (
            <tbody key={g.title}>
              <tr>
                <GroupHeading colSpan={2}>{g.title}</GroupHeading>
                <MetricCell $heat="faint" /><MetricCell $heat="faint" /><MetricCell $heat="faint" /><MetricCell $heat="faint" $last />
              </tr>
              {g.rows.map(([name, icon, expandable, cpu, mem, cpuHeat, hover], i) => (
                <ProcessRow key={i} $hover={hover}>
                  <td>
                    <NameCell>
                      <Expander $shown={expandable} aria-label="Expand"><Caret dir="right" color="#8a8a8a" weight={1.5} /></Expander>
                      {icon}
                      <span>{name}</span>
                    </NameCell>
                  </td>
                  <td />
                  <MetricCell $heat={cpuHeat} $hover={hover}>{cpu}</MetricCell>
                  <MetricCell $heat="high" $hover={hover}>{mem}</MetricCell>
                  <MetricCell $heat="low" $hover={hover}>{name && "0 MB/s"}</MetricCell>
                  <MetricCell $heat="low" $hover={hover} $last />
                </ProcessRow>
              ))}
            </tbody>
          ))}
        </ProcessTable>
      </TableViewport>
      <ScrollColumn>
        <ScrollTrack $vertical>
          <ScrollButton $vertical aria-label="Scroll up"><Caret dir="up" /></ScrollButton>
          <ScrollThumb $length={45} />
          <ScrollRest />
          <ScrollButton $vertical aria-label="Scroll down"><Caret /></ScrollButton>
        </ScrollTrack>
      </ScrollColumn>
    </ProcessArea>
    <HorizontalScroll>
      <ScrollTrack>
        <ScrollButton aria-label="Scroll left"><Caret dir="left" /></ScrollButton>
        <ScrollThumb $grow={433} />
        <ScrollRest $grow={179} />
        <ScrollButton aria-label="Scroll right"><Caret dir="right" /></ScrollButton>
      </ScrollTrack>
    </HorizontalScroll>
    <Footer>
      <DetailsToggle><RoundMark><Caret dir="up" color="#707070" weight={1.2} /></RoundMark>Fewer details</DetailsToggle>
      <EndTask>End task</EndTask>
    </Footer>
  </WindowFrame>
);

/* ---------- file explorer ---------- */

const RibbonBar = styled.div`
  display: flex;
  align-items: center;
  justify-content: flex-end;
  gap: 9px;
  height: 24px;
  flex: none;
  padding: 0 3px 1px 0;
  border-bottom: 1px solid #dfdcda;
`;

const PlainButton = styled.button`
  display: flex;
  align-items: center;
  justify-content: center;
`;

const Ribbon = styled.div`
  display: flex;
  justify-content: flex-end;
  height: 92px;
  flex: none;
  padding-right: 25px;
  background: #f5f6f7;
  border-bottom: 1px solid #d9dadb;
`;

const RibbonGroup = styled.div`
  display: flex;
  flex-direction: column;
  justify-content: space-between;
  align-items: center;
  width: ${(p) => p.$width}px;
  margin: 1px 0;
  padding: 3px 0 0;
  border-right: 1px solid #e0e2e4;
`;

const GroupCaption = styled.span`
  line-height: 17px;
  color: #444c57;
`;

const GroupBody = styled.div`
  display: flex;
  gap: ${(p) => p.$gap || 6}px;
  align-self: stretch;
  padding-left: ${(p) => p.$inset || 6}px;
`;

const CommandStack = styled.div`
  display: flex;
  flex-direction: column;
`;

const Command = styled.button`
  display: flex;
  align-items: center;
  gap: 3px;
  height: 22px;
  white-space: nowrap;
  color: ${(p) => (p.$disabled ? "#7f858c" : "#1d2230")};

  > span { padding-bottom: 2px; }
`;

const TallCommand = styled.button`
  display: flex;
  flex-direction: column;
  align-items: center;
  gap: 5px;
  padding-top: 5px;
  line-height: 13px;
  color: #1d2230;
`;

const AddressRow = styled.div`
  display: flex;
  align-items: center;
  gap: 12px;
  height: 34px;
  flex: none;
  padding: 0 12px 0 8px;
`;

const AddressBox = styled.div`
  display: flex;
  justify-content: flex-end;
  flex: 1;
  height: 22px;
  border: 1px solid #d9d9d9;

  > button { width: 17px; }
  > button + button { border-left: 1px solid #d9d9d9; }
`;

const SearchBox = styled.label`
  display: flex;
  align-items: center;
  width: 202px;
  height: 22px;
  padding: 0 8px;
  border: 1px solid #d9d9d9;

  input {
    flex: 1;
    min-width: 0;
    padding-bottom: 2px;
    outline: 0;
  }
  input::placeholder { color: #6d6d6d; opacity: 1; }
`;

const ExplorerBody = styled.div`
  display: flex;
  flex: 1;
  min-height: 0;
  gap: 5px;
`;

const NavPane = styled.nav`
  display: flex;
  width: 154px;
`;

const NavTree = styled.div`
  display: flex;
  flex: 1;
  min-width: 0;
  flex-direction: column;
  justify-content: flex-end;
  padding: 0 2px 5px 55px;
`;

const NavLink = styled.a`
  display: flex;
  align-items: center;
  gap: 5px;
  height: 20px;
  overflow: hidden;
  white-space: nowrap;
  font-family: ${wideFont};
`;

const FilePane = styled.div`
  display: flex;
  flex: 1;
  min-width: 0;
  flex-direction: column;
  justify-content: space-between;
  padding-right: 1px;
`;

const FileTable = styled.table`
  width: calc(100% - 7px);
  table-layout: fixed;
  border-collapse: separate;
  border-spacing: 0;
  color: #6a6d70;

  th {
    height: 26px;
    padding: 0 6px;
    font-weight: 400;
    text-align: left;
    color: #4c5f78;
    border-right: 1px solid #e5e5e5;
  }
  td {
    height: 21px;
    padding: 0 6px;
    white-space: nowrap;
  }
`;

const SizeCell = styled.td`
  && { text-align: right; padding-right: 8px; }
`;

const ListGap = styled.td`
  && { height: ${(p) => p.$height}px; padding: 0; vertical-align: top; }
`;

const GroupRule = styled.hr`
  margin: 18px 0 0;
  border: 0;
  border-top: 1px solid #e3e3e3;
`;

const StatusBar = styled.footer`
  display: flex;
  align-items: center;
  height: 23px;
  flex: none;
  padding: 0 4px 0 14px;
  color: #1e2a55;

  > span { flex: 1; }
`;

const ViewButton = styled.button`
  display: flex;
  align-items: center;
  justify-content: center;
  width: 22px;
  height: 23px;
  ${(p) => p.$active && css`
    background: #cce8f7;
    border: 1px solid #2a8dc0;
  `}
`;

const Explorer = ({ place, search, status, nav, rows, grouped }) => (
  <WindowFrame {...place}>
    <Caption title="" />
    <RibbonBar>
      <PlainButton aria-label="Collapse ribbon"><Caret dir="up" color="#8a8a8a" weight={1.4} /></PlainButton>
      <PlainButton aria-label="Help"><HelpIcon /></PlainButton>
    </RibbonBar>
    <Ribbon>
      {nav && (
        <>
          <RibbonGroup $width={86}>
            <GroupBody $gap={8}>
              <TallCommand><NewFolderIcon />New folder</TallCommand>
              <CommandStack>
                <Command aria-label="New item"><NewItemIcon /><DropArrow /></Command>
                <Command aria-label="Easy access"><EasyAccessIcon /><DropArrow /></Command>
              </CommandStack>
            </GroupBody>
            <GroupCaption>New</GroupCaption>
          </RibbonGroup>
          <RibbonGroup $width={133}>
            <GroupBody>
              <TallCommand><PropertiesIcon /><span>Properties</span><DropArrow /></TallCommand>
              <CommandStack>
                <Command $disabled><OpenIcon /><span>Open</span><DropArrow color="#a5a9ad" /></Command>
                <Command $disabled><EditIcon /><span>Edit</span></Command>
                <Command><HistoryIcon /><span>History</span></Command>
              </CommandStack>
            </GroupBody>
            <GroupCaption>Open</GroupCaption>
          </RibbonGroup>
        </>
      )}
      <RibbonGroup $width={115}>
        <GroupBody $inset={7}>
          <CommandStack>
            <Command><SelectAllIcon /><span>Select all</span></Command>
            <Command><SelectNoneIcon /><span>Select none</span></Command>
            <Command><InvertIcon /><span>Invert selection</span></Command>
          </CommandStack>
        </GroupBody>
        <GroupCaption>Select</GroupCaption>
      </RibbonGroup>
    </Ribbon>
    <AddressRow>
      <AddressBox>
        <PlainButton aria-label="Previous locations"><Caret weight={1.8} /></PlainButton>
        <PlainButton aria-label="Refresh"><RefreshGlyph /></PlainButton>
      </AddressBox>
      <SearchBox>
        <input type="text" placeholder={search} aria-label={search} />
        <SearchGlyph />
      </SearchBox>
    </AddressRow>
    <ExplorerBody>
      <NavPane>
        {nav && (
          <>
            <NavTree><NavLink href="#"><FolderIcon />{nav}</NavLink></NavTree>
            <ScrollTrack $vertical>
              <ScrollRest />
              <ScrollButton $vertical aria-label="Scroll down"><Caret /></ScrollButton>
            </ScrollTrack>
          </>
        )}
      </NavPane>
      <FilePane>
        <FileTable>
          <colgroup>
            <col />
            <col style={{ width: 145 }} />
            <col style={{ width: 120 }} />
            <col style={{ width: 80 }} />
          </colgroup>
          <thead>
            <tr><th /><th>{nav && "Date modified"}</th><th>{nav && "Type"}</th><th>Size</th></tr>
          </thead>
          <tbody>
            <tr><ListGap colSpan={4} $height={grouped ? 34 : 6}>{grouped && <GroupRule />}</ListGap></tr>
            {rows.map(([date, type, size], i) => (
              <tr key={i}><td /><td>{date}</td><td>{type}</td><SizeCell>{size}</SizeCell></tr>
            ))}
          </tbody>
        </FileTable>
        <ScrollTrack>
          <ScrollButton aria-label="Scroll left"><Caret dir="left" /></ScrollButton>
          <ScrollThumb $grow={1} />
          <ScrollButton aria-label="Scroll right"><Caret dir="right" /></ScrollButton>
        </ScrollTrack>
      </FilePane>
    </ExplorerBody>
    <StatusBar>
      <span>{status}</span>
      <ViewButton $active aria-label="Details view"><DetailsViewIcon /></ViewButton>
      <ViewButton aria-label="Large icons view"><ThumbViewIcon /></ViewButton>
    </StatusBar>
  </WindowFrame>
);

/* ---------- taskbar ---------- */

const Taskbar = styled.footer`
  position: absolute;
  left: 0;
  right: 0;
  bottom: 0;
  display: flex;
  height: 40px;
  background: rgba(0, 0, 0, 0.86);
  color: #fff;
`;

const StartButton = styled.button`
  display: flex;
  align-items: center;
  justify-content: center;
  width: 48px;
`;

const TaskbarSearch = styled.label`
  display: flex;
  align-items: center;
  gap: 11px;
  width: 288px;
  padding: 0 12px;
  background: #f1f1f1;
  border: 1px solid #cfcfcf;

  input {
    flex: 1;
    min-width: 0;
    padding-top: 2px;
    outline: 0;
    font-size: 14px;
    line-height: 20px;
  }
  input::placeholder { color: #3a3a3a; opacity: 1; }
`;

const TaskButtons = styled.nav`
  display: flex;
  gap: 1px;
  flex: 1;
`;

const TaskButton = styled.button`
  display: flex;
  align-items: center;
  justify-content: center;
  width: ${(p) => p.$width || 48}px;
  ${(p) => p.$running && css`
    background: linear-gradient(#76b9ed, #76b9ed) bottom / ${p.$active ? 48 : 40}px 2px no-repeat ${p.$active ? "rgba(255, 255, 255, 0.28)" : "transparent"};
  `}
`;

const Tray = styled.div`
  display: flex;
  align-items: center;
`;

const TrayIcons = styled.div`
  display: flex;
  gap: 8px;
  padding-right: 6px;
  > button { width: 16px; }
`;

const Clock = styled.button`
  width: 60px;
  line-height: 18px;
  white-space: nowrap;
`;

const NotificationButton = styled.button`
  display: flex;
  align-items: center;
  justify-content: center;
  width: 44px;
  height: 40px;
  margin-right: 6px;
`;

const ShowDesktop = styled.button`
  width: 5px;
  height: 40px;
  border-left: 1px solid #5a6066;
`;

/* ---------- watermark ---------- */

const Watermark = styled.div`
  position: absolute;
  right: 49px;
  bottom: 46px;
  display: flex;
  align-items: center;
  gap: 8px;
  font: 400 38px/66px "Roboto Condensed", "Liberation Sans Narrow", sans-serif;
  color: rgba(255, 255, 255, 0.6);
  text-shadow: 0 0 2px rgba(110, 110, 110, 0.6);
  pointer-events: none;
`;

const PlayMark = () => (
  <Svg w={54} h={66}>
    <path d="M3 12l9-8 40 25v7L13 63l-8-4V44l7 5 22-15-20-13v34l-11-4z" fill="rgba(255,255,255,.5)" stroke="rgba(160,160,160,.35)" />
    <path d="M14 14l30 19-30 20" stroke="rgba(160,160,160,.4)" />
  </Svg>
);

export default function App() {
  return (
    <Desktop>
      <GlobalStyle />
      <IconGrid aria-label="Desktop">
        {desktopItems.map(([label, icon], i) => (
          <DesktopItem key={i} href="#">{icon}{label && <span>{label}</span>}</DesktopItem>
        ))}
      </IconGrid>

      <Explorer
        place={{ $top: 52, $left: 473, $right: 22, $bottom: 76 }}
        search="Search Downloads"
        grouped
        rows={[["", "", "8 KB"], ["", "", "8 KB"], ["", "", "9 KB"], ["", "", "31 KB"], ["", "", "7 KB"]]}
      />
      <Explorer
        place={{ $top: 100, $left: 336, $right: 159, $bottom: 28 }}
        search="Search AppData"
        status="3 items"
        nav="PackageMa"
        rows={[
          ["1/6/2024 5:24 PM", "File folder", ""],
          ["1/9/2023 3:22 PM", "File folder", ""],
          ["4/13/2025 2:19 PM", "File folder", ""],
        ]}
      />
      <TaskManager />

      <Taskbar>
        <StartButton aria-label="Start"><WindowsLogo /></StartButton>
        <TaskbarSearch>
          <SearchGlyph size={16} color="#222" weight={1.2} />
          <input type="text" placeholder="Type here to search" aria-label="Type here to search" />
        </TaskbarSearch>
        <TaskButtons>
          <TaskButton $width={50} aria-label="Task view"><TaskViewIcon /></TaskButton>
          <TaskButton aria-label="Edge"><EdgeIcon size={24} id="edt" /></TaskButton>
          <TaskButton $running aria-label="File Explorer"><FolderAppIcon size={22} /></TaskButton>
          <TaskButton aria-label="Firefox"><FirefoxIcon size={24} id="fft" /></TaskButton>
          <TaskButton $running $active aria-label="Task Manager"><TaskManagerLarge /></TaskButton>
        </TaskButtons>
        <Tray>
          <TrayIcons>
            <PlainButton aria-label="Show hidden icons"><Caret dir="up" size={16} color="#fff" weight={1} /></PlainButton>
            <PlainButton aria-label="Input"><TrayGridIcon /></PlainButton>
            <PlainButton aria-label="Meet now"><TrayCameraIcon /></PlainButton>
            <PlainButton aria-label="Network"><TrayNetworkIcon /></PlainButton>
            <PlainButton aria-label="Volume"><TrayVolumeIcon /></PlainButton>
          </TrayIcons>
          <Clock>2:20 PM<br />4/13/2025</Clock>
          <NotificationButton aria-label="Notifications"><ActionCenterIcon /></NotificationButton>
          <ShowDesktop aria-label="Show desktop" />
        </Tray>
      </Taskbar>

      <Watermark><span>ANY</span><PlayMark /><span>RUN</span></Watermark>
    </Desktop>
  );
}
